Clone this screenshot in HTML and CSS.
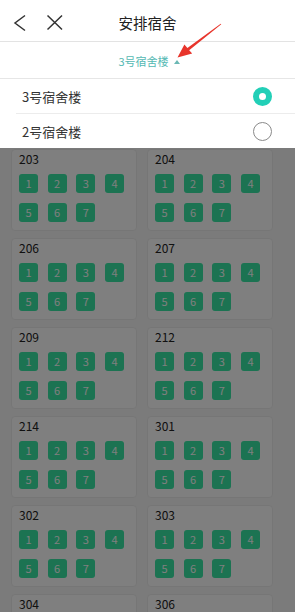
FILE: index.html
```html
<!DOCTYPE html>
<html lang="zh">
<head>
<meta charset="utf-8">
<title>安排宿舍</title>
<link rel="stylesheet" href="styles.css">
</head>
<body>
<div class="page">
  <header class="nav">
    <div class="nav-left">
      <svg class="nav-icon" viewBox="0 0 18 18" width="18" height="18"><path d="M13 1.5 L3 9 L13 16.5" fill="none" stroke="#333" stroke-width="1.5" stroke-linejoin="miter"/></svg>
      <svg class="nav-icon" viewBox="0 0 18 18" width="18" height="18"><path d="M1.5 1.5 L16 15.5 M16 1.5 L1.5 15.5" fill="none" stroke="#333" stroke-width="1.5"/></svg>
    </div>
    <h1 class="nav-title">安排宿舍</h1>
    <div class="nav-right"></div>
  </header>

  <div class="filter">
    <span class="filter-label">3号宿舍楼</span><span class="caret"></span>
  </div>

  <ul class="options">
    <li class="option"><span class="option-text">3号宿舍楼</span><span class="radio radio-on"></span></li>
    <li class="option"><span class="option-text">2号宿舍楼</span><span class="radio"></span></li>
  </ul>

  <div class="content">
    <div class="grid">
      <div class="card"><div class="card-title">203</div><div class="beds"><span class="bed">1</span><span class="bed">2</span><span class="bed">3</span><span class="bed">4</span><span class="bed">5</span><span class="bed">6</span><span class="bed">7</span></div></div>
      <div class="card"><div class="card-title">204</div><div class="beds"><span class="bed">1</span><span class="bed">2</span><span class="bed">3</span><span class="bed">4</span><span class="bed">5</span><span class="bed">6</span><span class="bed">7</span></div></div>
      <div class="card"><div class="card-title">206</div><div class="beds"><span class="bed">1</span><span class="bed">2</span><span class="bed">3</span><span class="bed">4</span><span class="bed">5</span><span class="bed">6</span><span class="bed">7</span></div></div>
      <div class="card"><div class="card-title">207</div><div class="beds"><span class="bed">1</span><span class="bed">2</span><span class="bed">3</span><span class="bed">4</span><span class="bed">5</span><span class="bed">6</span><span class="bed">7</span></div></div>
      <div class="card"><div class="card-title">209</div><div class="beds"><span class="bed">1</span><span class="bed">2</span><span class="bed">3</span><span class="bed">4</span><span class="bed">5</span><span class="bed">6</span><span class="bed">7</span></div></div>
      <div class="card"><div class="card-title">212</div><div class="beds"><span class="bed">1</span><span class="bed">2</span><span class="bed">3</span><span class="bed">4</span><span class="bed">5</span><span class="bed">6</span><span class="bed">7</span></div></div>
      <div class="card"><div class="card-title">214</div><div class="beds"><span class="bed">1</span><span class="bed">2</span><span class="bed">3</span><span class="bed">4</span><span class="bed">5</span><span class="bed">6</span><span class="bed">7</span></div></div>
      <div class="card"><div class="card-title">301</div><div class="beds"><span class="bed">1</span><span class="bed">2</span><span class="bed">3</span><span class="bed">4</span><span class="bed">5</span><span class="bed">6</span><span class="bed">7</span></div></div>
      <div class="card"><div class="card-title">302</div><div class="beds"><span class="bed">1</span><span class="bed">2</span><span class="bed">3</span><span class="bed">4</span><span class="bed">5</span><span class="bed">6</span><span class="bed">7</span></div></div>
      <div class="card"><div class="card-title">303</div><div class="beds"><span class="bed">1</span><span class="bed">2</span><span class="bed">3</span><span class="bed">4</span><span class="bed">5</span><span class="bed">6</span><span class="bed">7</span></div></div>
      <div class="card card-partial"><div class="card-title">304</div></div>
      <div class="card card-partial"><div class="card-title">306</div></div>
    </div>
    <div class="mask"></div>
  </div>

  <svg class="annot-arrow" viewBox="0 0 295 80" width="295" height="80"><polygon points="221.3,24.3 189.2,50.3 192.2,53.6 177.5,57.5 184.4,44.4 187.4,48 220.7,23.7" fill="#e8352c"/></svg>
</div>
</body>
</html>
```
FILE: styles.css
```css
* { box-sizing: border-box; }
html, body { margin: 0; padding: 0; }
body {
  font-family: "Noto Sans CJK SC", "Noto Sans", sans-serif;
  background: #fff;
  color: #222;
}
.page {
  position: relative;
  width: 295px;
  height: 612px;
  overflow: hidden;
  display: flex;
  flex-direction: column;
}
.nav {
  height: 42px;
  padding-top: 4px;
  border-bottom: 1px solid #e3e3e3;
  display: grid;
  grid-template-columns: 1fr auto 1fr;
  align-items: center;
  flex: none;
}
.nav-left {
  display: flex;
  align-items: center;
  gap: 16px;
  padding-left: 12px;
}
.nav-icon { display: block; }
.nav-title {
  margin: 0;
  font-size: 14.5px;
  font-weight: 400;
  color: #222;
  line-height: 20px;
}
.filter {
  height: 37px;
  border-bottom: 1px solid #e6e6e6;
  display: flex;
  align-items: center;
  justify-content: center;
  flex: none;
  padding-top: 1px;
}
.filter-label {
  font-size: 11px;
  color: #55b9b3;
  line-height: 14px;
  margin-left: 3px;
}
.caret {
  width: 0;
  height: 0;
  border-left: 3px solid transparent;
  border-right: 3px solid transparent;
  border-bottom: 4px solid #6bb8b4;
  margin-left: 5px;
  margin-top: 2px;
}
.options {
  list-style: none;
  margin: 0;
  padding: 0;
  flex: none;
}
.option {
  height: 35px;
  margin-left: 16px;
  padding: 0 23px 0 6px;
  display: flex;
  align-items: center;
  justify-content: space-between;
  border-bottom: 1px solid #ececec;
}
.option:last-child { border-bottom: none; height: 34px; }
.option-text {
  font-size: 13px;
  color: #333;
  line-height: 18px;
  padding-top: 2px;
}
.radio {
  width: 19px;
  height: 19px;
  border-radius: 50%;
  border: 1px solid #8a8a8a;
  background: #fff;
}
.radio-on {
  border: 6.5px solid #22cfb7;
}
.content {
  position: relative;
  flex: 1;
  background: #f6f6f6;
  padding: 1px 21px 0 11px;
  overflow: hidden;
}
.grid {
  display: grid;
  grid-template-columns: 126px 126px;
  column-gap: 10px;
  row-gap: 7px;
}
.card {
  background: #fff;
  border: 1px solid #ededed;
  border-radius: 4px;
  padding: 1px 7px 8px;
}
.card-partial { height: 82px; }
.card-title {
  font-size: 12px;
  line-height: 16px;
  color: #222;
  margin-bottom: 7px;
}
.beds {
  display: grid;
  grid-template-columns: repeat(4, 19px);
  column-gap: 9.67px;
  row-gap: 10px;
}
.bed {
  width: 19px;
  height: 19px;
  border-radius: 3px;
  background: #38e6a4;
  color: #fff;
  font-size: 11px;
  line-height: 19px;
  text-align: center;
}
.mask {
  position: absolute;
  inset: 0;
  background: rgba(0, 0, 0, 0.5);
}
.annot-arrow {
  position: absolute;
  left: 0;
  top: 0;
  pointer-events: none;
}
```
